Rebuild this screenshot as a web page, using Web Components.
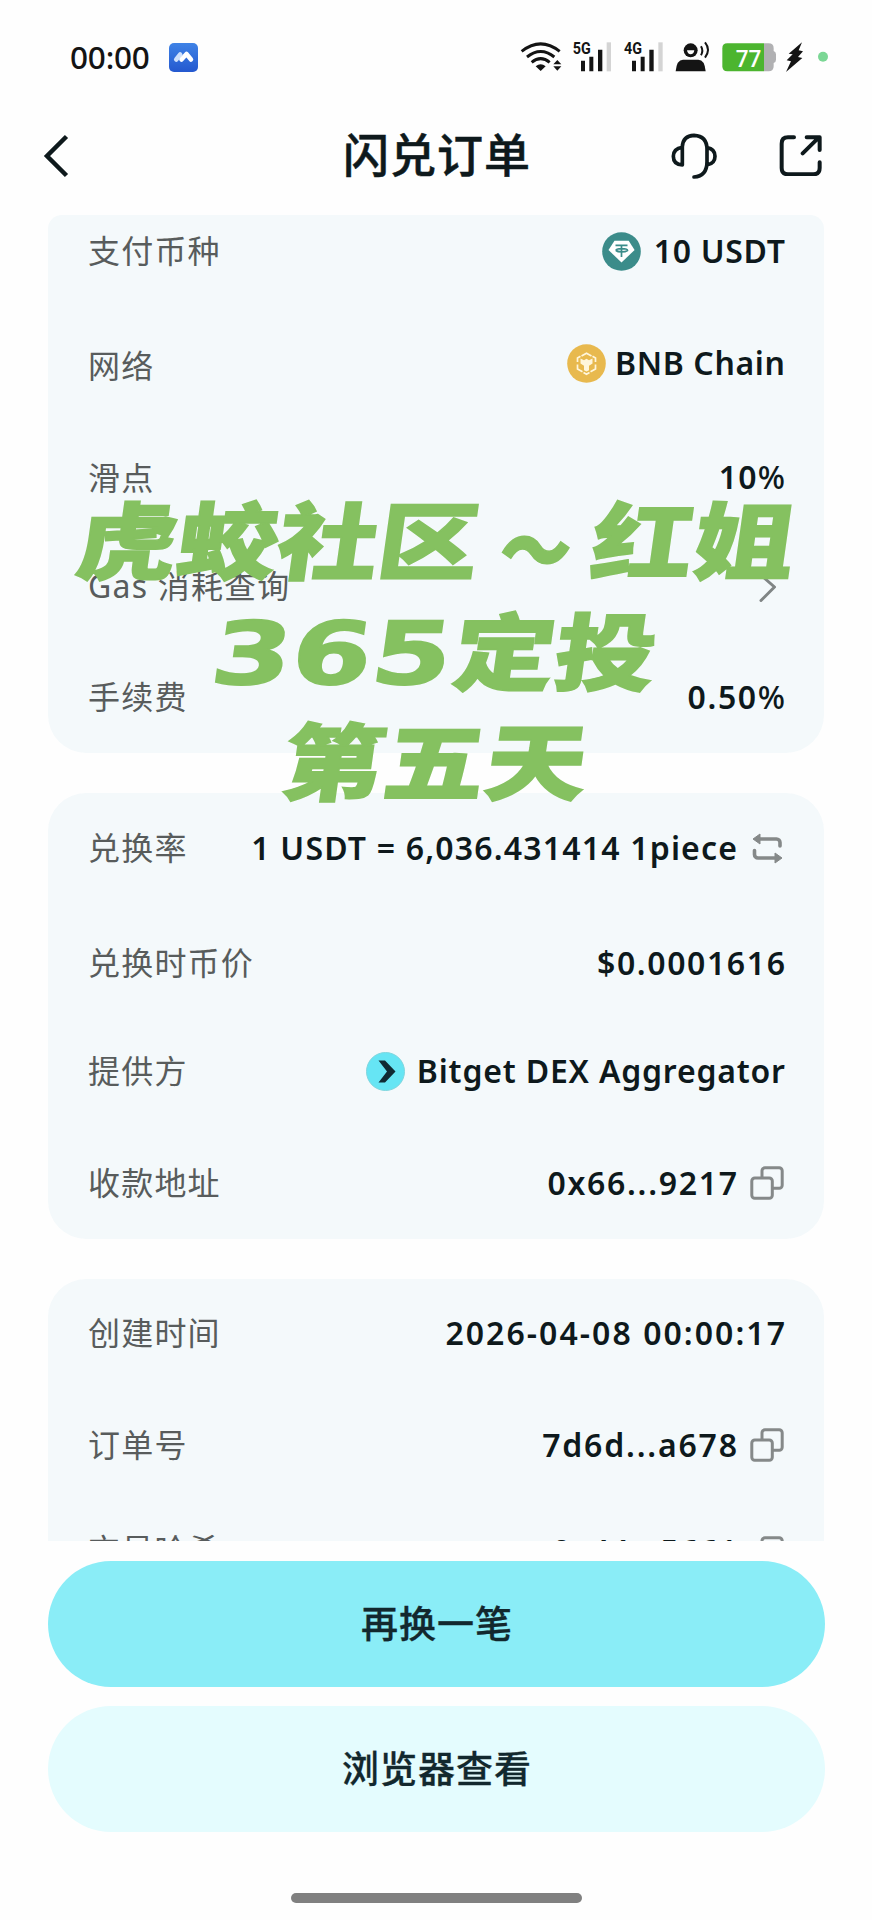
<!DOCTYPE html>
<html lang="zh-CN">
<head>
<meta charset="utf-8">
<title>闪兑订单</title>
<style>
html,body{margin:0;background:#fefefe}
body{font-family:"Noto Sans","Noto Sans CJK SC",sans-serif;color:#0e191c}
</style>
</head>
<body>
<order-page></order-page>
<script>
const define=(name,html)=>{
  const t=document.createElement('template');
  t.innerHTML=html;
  customElements.define(name,class extends HTMLElement{
    constructor(){super();this.attachShadow({mode:'open'}).append(t.content.cloneNode(true));}
  });
};

const ICONS={
  usdt:['0 0 39 39',39,39,`<circle cx="19.5" cy="19.5" r="19.3" fill="#3b8c8a"/><path d="M12.500 8.800h14.200L32.600 18 19.500 30.500 6.500 18z" fill="#fff"/><path d="M13.500 13.300h12M19.500 13v12M14 18.500c2 1.800 9 1.800 11.500 0c0-2.600-11.500-2.600-11.500 0" stroke="#3b8c8a" stroke-width="1.700" fill="none"/>`],
  bnb:['0 0 39 39',39,39,`<circle cx="19.5" cy="19.5" r="19.3" fill="#e8b94e"/><g fill="none" stroke="#fff6dc" stroke-width="1.700"><path d="M14.500 12l5-2.800 5 2.800M10.500 18v-4l3-1.700M28.500 18v-4l-3-1.700M10.500 20.500v4.500l5 2.800M28.500 20.500v4.500l-5 2.800M16.500 28.500l3 1.700 3-1.700"/></g><path d="M13.500 14.500l3.500 1.700 2.500-1.500 2.500 1.500 3.500-1.700v5l-3.500 2.200v4.500l-2.500 1.400-2.500-1.400v-4.500l-3.500-2.200z" fill="#fff6dc"/>`],
  bitget:['0 0 39 39',39,39,`<circle cx="19.500" cy="19.500" r="19" fill="#66e5f4" stroke="#7fd6de"/><path d="M12.500 8.500h6.500l10.500 11-10.500 11h-6.500l8.500-11z" fill="#102a33"/>`],
  copy:['0 0 34 34',34,34,`<path d="M12 11V4.800a3 3 0 0 1 3-3h14.200a3 3 0 0 1 3 3v14.400a3 3 0 0 1-3 3H23" fill="none" stroke="#858989" stroke-width="3"/><rect x="1.800" y="12" width="20.500" height="20.200" rx="3" fill="none" stroke="#858989" stroke-width="3"/>`],
  swap:['0 0 31 32',31,32,`<g fill="none" stroke="#858989" stroke-width="3.600" stroke-linecap="round"><path d="M7 7h17.500a3.500 3.500 0 0 1 3.500 3.500v3.500M23 26H6a3.500 3.500 0 0 1-3.500-3.500v-4"/></g><path d="M1 7L8 2v10zM30 26L23 21v10z" fill="#858989" stroke="#858989" stroke-linejoin="round"/>`],
  chev:['0 0 20 30',20,30,`<path d="M3 3l13.500 12-13.500 13.500" fill="none" stroke="#808585" stroke-width="3" stroke-linecap="round" stroke-linejoin="round"/>`]
};

customElements.define('x-icon',class extends HTMLElement{
  constructor(){super();this.attachShadow({mode:'open'});}
  connectedCallback(){
    const [vb,w,h,body]=ICONS[this.getAttribute('name')];
    this.shadowRoot.innerHTML=`<style>:host{display:block;flex:none;width:${w}px;height:${h}px}svg{display:block}</style><svg width="${w}" height="${h}" viewBox="${vb}">${body}</svg>`;
  }
});

define('status-bar',`<style>
:host{display:flex;box-sizing:border-box;height:114px;padding:0 44px 0 70px;align-items:center;color:#141414}
.time{font:500 31.500px/1 "Noto Sans",sans-serif;width:99px;letter-spacing:-.2px}
svg{display:block;overflow:visible}
.right{display:flex;margin-left:auto;align-items:center}
text{font-family:"Roboto",sans-serif}
</style>
<span class="time">00:00</span>
<svg width="29" height="29" viewBox="0 0 29 29"><defs><linearGradient id="g" x2="0" y2="1"><stop stop-color="#3f83e6"/><stop offset="1" stop-color="#2458cf"/></linearGradient></defs><rect width="29" height="29" rx="5" fill="url(#g)"/><path d="M7.200 16.500l4-5" fill="none" stroke="#cfe0fb" stroke-width="4.500" stroke-linecap="round"/><path d="M12.500 16.500l5-5.500 4.500 5.500" fill="none" stroke="#fff" stroke-width="4.500" stroke-linecap="round" stroke-linejoin="round"/></svg>
<div class="right">
<svg width="42" height="34" viewBox="62 62 126 102"><g fill="none" stroke="#141414" stroke-width="9"><path d="M67 96q57-45 114 0M83 113q41-33 82 0M97 129q27-22 54 0"/></g><path d="M109 141q15-13 30 0l-15 14zM162 135l12-13 12 13zM162 141h24l-12 13z" fill="#141414"/></svg>
<svg width="39" height="34" viewBox="218 62 117 102" style="margin-left:10px"><text x="220" y="104" font-size="51" font-weight="700" textLength="54" lengthAdjust="spacingAndGlyphs" fill="#141414">5G</text><path d="M245 124h12v32h-12zM270 112h12v44h-12zM296 91h13v65h-13z" fill="#141414"/><path d="M322 69h13v87h-13z" fill="#d4d4d4"/></svg>
<svg width="40" height="34" viewBox="370 62 120 102" style="margin-left:12px"><text x="373" y="104" font-size="51" font-weight="700" textLength="54" lengthAdjust="spacingAndGlyphs" fill="#141414">4G</text><path d="M397 124h12v32h-12zM423 112h12v44h-12zM449 91h13v65h-13z" fill="#141414"/><path d="M476 69h13v87h-13z" fill="#d4d4d4"/></svg>
<svg width="35" height="34" viewBox="526 62 105 102" style="margin-left:12px"><circle cx="573" cy="93" r="21" fill="#141414"/><path d="M562 93h22q-2 12-11 12t-11-12z" fill="#fff"/><path d="M528 156q3-35 22-35h46q19 0 22 35z" fill="#141414"/><path d="M604 81q8 13 0 27M616 69q18 22 0 46" fill="none" stroke="#141414" stroke-width="6"/></svg>
<svg width="54" height="34" viewBox="668 62 162 102" style="margin-left:12px"><path d="M684 72h110v84H684q-15 0-15-15V87q0-15 15-15z" fill="#4cb52f"/><path d="M794 72h14q15 0 15 15v8q7 2 7 10v16q0 8-7 10v10q0 15-15 15h-14z" fill="#b1b1b3"/><text x="709" y="142" font-size="72" font-weight="500" textLength="77" lengthAdjust="spacingAndGlyphs" fill="#fff">77</text></svg>
<svg width="18" height="34" viewBox="856 62 54 102" style="margin-left:9px"><path d="M907 69l-40 34 12 2-18 18 13 3-15 32 49-42-13-3 15-17-13-3z" fill="#141414"/></svg>
<svg width="10" height="34" viewBox="954 62 30 102" style="margin-left:15px"><circle cx="969" cy="112" r="15" fill="#7bd795"/></svg>
</div>`);

define('nav-bar',`<style>
:host{display:grid;box-sizing:border-box;height:101px;padding:0 50px 18px 43px;grid-template-columns:1fr auto 1fr;align-items:center}
h1{margin:0 -1px 8px 8px;font:500 46px/1 "Noto Sans CJK SC",sans-serif;letter-spacing:1px;-webkit-text-stroke:.5px #0e191c}
.act{display:flex;justify-content:flex-end;gap:62px}
svg{display:block}
path{fill:none;stroke:#0e191c;stroke-linecap:round;stroke-linejoin:round}
</style>
<svg width="26" height="44" viewBox="0 0 26 44"><path d="M23.500 2.500L4 22l19.500 19.500" style="stroke-width:4.500;stroke-linecap:butt;stroke-linejoin:miter"/></svg>
<h1>闪兑订单</h1>
<div class="act">
<svg width="46" height="46" viewBox="704 99 138 138"><path stroke-width="11" d="M738 195V140Q740 107 773 106Q812 108 812 148V185Q812 228 773 231M738 142Q711 146 711 169Q711 194 738 195M812 143Q836 147 836 169Q836 191 812 195"/></svg>
<svg width="43" height="43" viewBox="1030 101 129 129"><path stroke-width="12" d="M1075 114H1057Q1038 114 1038 133V206Q1038 225 1057 225H1133Q1152 225 1152 206V189M1101 162L1149 115M1113 114H1152V152"/></svg>
</div>`);

define('info-card',`<style>
:host{display:block;box-sizing:border-box;background:#f4f9fb;border-radius:38px;padding:0 39px 0 40px}
</style><slot></slot>`);

define('info-row',`<style>
:host{display:flex;align-items:center;justify-content:space-between;height:var(--h,112px);white-space:nowrap}
.l{font:400 32px/1.2 "Noto Sans","Noto Sans CJK SC",sans-serif;letter-spacing:1.200px;color:#585c5c;transform:translateY(var(--ly,0))}
.v{display:flex;align-items:center;font:600 32px/1.2 "Noto Sans","Noto Sans CJK SC",sans-serif;color:#0e191c}
.t{display:block;letter-spacing:var(--ls,0);margin-right:calc(0px - var(--ls,0px))}
::slotted([slot=lead]){margin-right:var(--gap,12px)}
::slotted([slot=trail]){margin:0 1px 0 13px}
</style><span class="l"><slot name="label"></slot></span><span class="v"><slot name="lead"></slot><span class="t"><slot></slot></span><slot name="trail"></slot></span>`);

define('pill-button',`<style>
:host{display:flex;box-sizing:border-box;align-items:center;justify-content:center;height:126px;padding:0 0 3px 1px;border-radius:63px;background:var(--bg);font:500 37px/1 "Noto Sans CJK SC",sans-serif;letter-spacing:1px;color:#12282e;-webkit-text-stroke:.3px #12282e}
</style><slot></slot>`);

define('water-mark',`<style>
:host{position:absolute;left:0;top:460px;width:872px;height:380px;pointer-events:none}
svg{display:block;overflow:visible}
text{font-family:"Noto Sans CJK SC",sans-serif;font-weight:900;fill:#85c160;stroke:#85c160;stroke-width:1.500}
.d{font-family:"DejaVu Sans","Noto Sans CJK SC",sans-serif;font-weight:700}
</style>
<svg width="872" height="380" viewBox="0 460 872 380">
<g transform="translate(0 573) skewX(-8)">
<text x="73" font-size="84" textLength="402" lengthAdjust="spacingAndGlyphs">虎蛟社区</text>
<text x="497" y="9" font-size="84" textLength="71" lengthAdjust="spacingAndGlyphs">～</text>
<text x="588" font-size="84" textLength="203" lengthAdjust="spacingAndGlyphs">红姐</text>
</g>
<g transform="translate(208 684) skewX(-8)"><text class="d" font-size="87" textLength="240" lengthAdjust="spacingAndGlyphs">365</text></g>
<g transform="translate(450 684) skewX(-8)"><text font-size="84" textLength="202" lengthAdjust="spacingAndGlyphs">定投</text></g>
<g transform="translate(279 794) skewX(-8)"><text font-size="84" textLength="304" lengthAdjust="spacingAndGlyphs">第五天</text></g>
</svg>`);

define('order-page',`<style>
:host{display:flex;flex-direction:column;position:relative;width:872px;height:1920px;overflow:hidden;background:#fefefe}
main{height:1326px;box-sizing:border-box;overflow:hidden;padding:0 48px;display:flex;flex-direction:column;gap:40px;flex:none}
.c1{height:538px;border-radius:14px 14px 38px 38px;flex:none}
.c2{height:446px;flex:none}
.c3{height:400px;flex:none}
.p{font-weight:500}
footer{display:flex;flex-direction:column;gap:19px;padding:20px 47px 0 48px}
.home{width:291px;height:10px;border-radius:5px;background:#808080;margin:61px auto 0}
</style>
<status-bar></status-bar>
<nav-bar></nav-bar>
<main>
<info-card class="c1">
<info-row style="--h:73px;--ls:.7px;--gap:13px"><span slot="label">支付币种</span><x-icon slot="lead" name="usdt"></x-icon>10 USDT</info-row>
<info-row style="--h:150px;--ly:3px;--ls:.65px;--gap:9px"><span slot="label">网络</span><x-icon slot="lead" name="bnb"></x-icon>BNB Chain</info-row>
<info-row style="--h:78px;--ly:1px;--ls:1.2px"><span slot="label">滑点</span>10<span class="p">%</span></info-row>
<info-row style="--h:141px"><span slot="label">Gas 消耗查询</span><x-icon slot="trail" name="chev" style="margin-right:7px"></x-icon></info-row>
<info-row style="--h:80px;--ls:1.6px"><span slot="label">手续费</span>0.50<span class="p">%</span></info-row>
</info-card>
<info-card class="c2">
<info-row style="--h:110px;--ls:1.18px"><span slot="label">兑换率</span>1 USDT = 6,036.431414 1piece<x-icon slot="trail" name="swap" style="margin:0 2px 0 15px"></x-icon></info-row>
<info-row style="--h:120px;--ls:1.6px"><span slot="label">兑换时币价</span>$0.0001616</info-row>
<info-row style="--h:96px;--ls:.8px;--gap:12px"><span slot="label">提供方</span><x-icon slot="lead" name="bitget"></x-icon>Bitget DEX Aggregator</info-row>
<info-row style="--h:128px;--ls:1.7px"><span slot="label">收款地址</span>0x66...9217<x-icon slot="trail" name="copy"></x-icon></info-row>
</info-card>
<info-card class="c3">
<info-row style="--h:108px;--ls:2.05px"><span slot="label">创建时间</span>2026-04-08 00:00:17</info-row>
<info-row style="--h:116px;--ls:1.8px"><span slot="label">订单号</span>7d6d...a678<x-icon slot="trail" name="copy"></x-icon></info-row>
<info-row style="--h:100px;--ly:-3px;--ls:1.2px"><span slot="label">交易哈希</span><span style="position:relative;top:-2px">0x44...5661</span><x-icon slot="trail" name="copy"></x-icon></info-row>
</info-card>
</main>
<footer>
<pill-button style="--bg:#8aedf7">再换一笔</pill-button>
<pill-button style="--bg:#e4fcfe">浏览器查看</pill-button>
</footer>
<div class="home"></div>
<water-mark></water-mark>`);
</script>
</body>
</html>
